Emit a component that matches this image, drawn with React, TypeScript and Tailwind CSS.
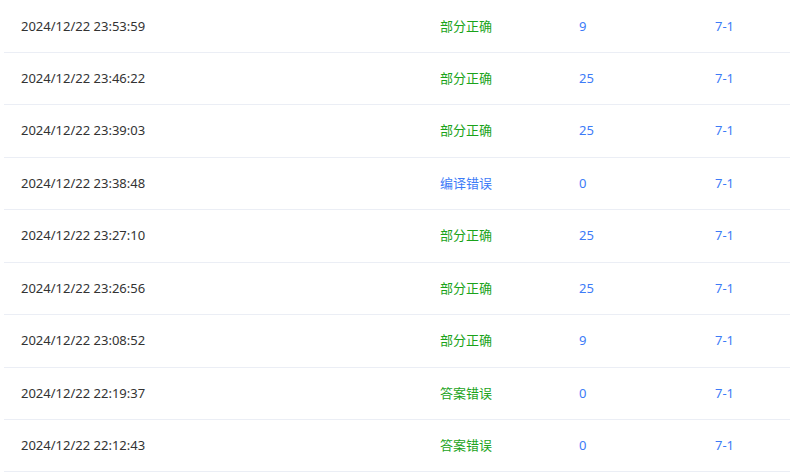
const rows = [
  { time: "2024/12/22 23:53:59", status: "部分正确", score: "9" },
  { time: "2024/12/22 23:46:22", status: "部分正确", score: "25" },
  { time: "2024/12/22 23:39:03", status: "部分正确", score: "25" },
  { time: "2024/12/22 23:38:48", status: "编译错误", score: "0" },
  { time: "2024/12/22 23:27:10", status: "部分正确", score: "25" },
  { time: "2024/12/22 23:26:56", status: "部分正确", score: "25" },
  { time: "2024/12/22 23:08:52", status: "部分正确", score: "9" },
  { time: "2024/12/22 22:19:37", status: "答案错误", score: "0" },
  { time: "2024/12/22 22:12:43", status: "答案错误", score: "0" },
];

export default function App() {
  return (
    <div
      className="w-[791px] h-[472px] bg-white overflow-hidden pt-[0.6px] pl-[4px] pr-[1px] text-[13px]"
      style={{ fontFamily: '"Noto Sans", "Noto Sans CJK SC", sans-serif' }}
    >
      {rows.map((r, i) => (
        <div
          key={i}
          className="flex items-center h-[52.43px] border-b border-[#ebeef5] text-[#333]"
        >
          <div className="w-[436px] pl-[17px]">{r.time}</div>
          <div
            className={
              "w-[139px] " +
              (r.status === "编译错误" ? "text-[#3d7bf7]" : "text-[#1aa31a]")
            }
          >
            {r.status}
          </div>
          <div className="w-[136px] text-[#3d7bf7]">{r.score}</div>
          <div className="text-[#3d7bf7]">7-1</div>
        </div>
      ))}
    </div>
  );
}
